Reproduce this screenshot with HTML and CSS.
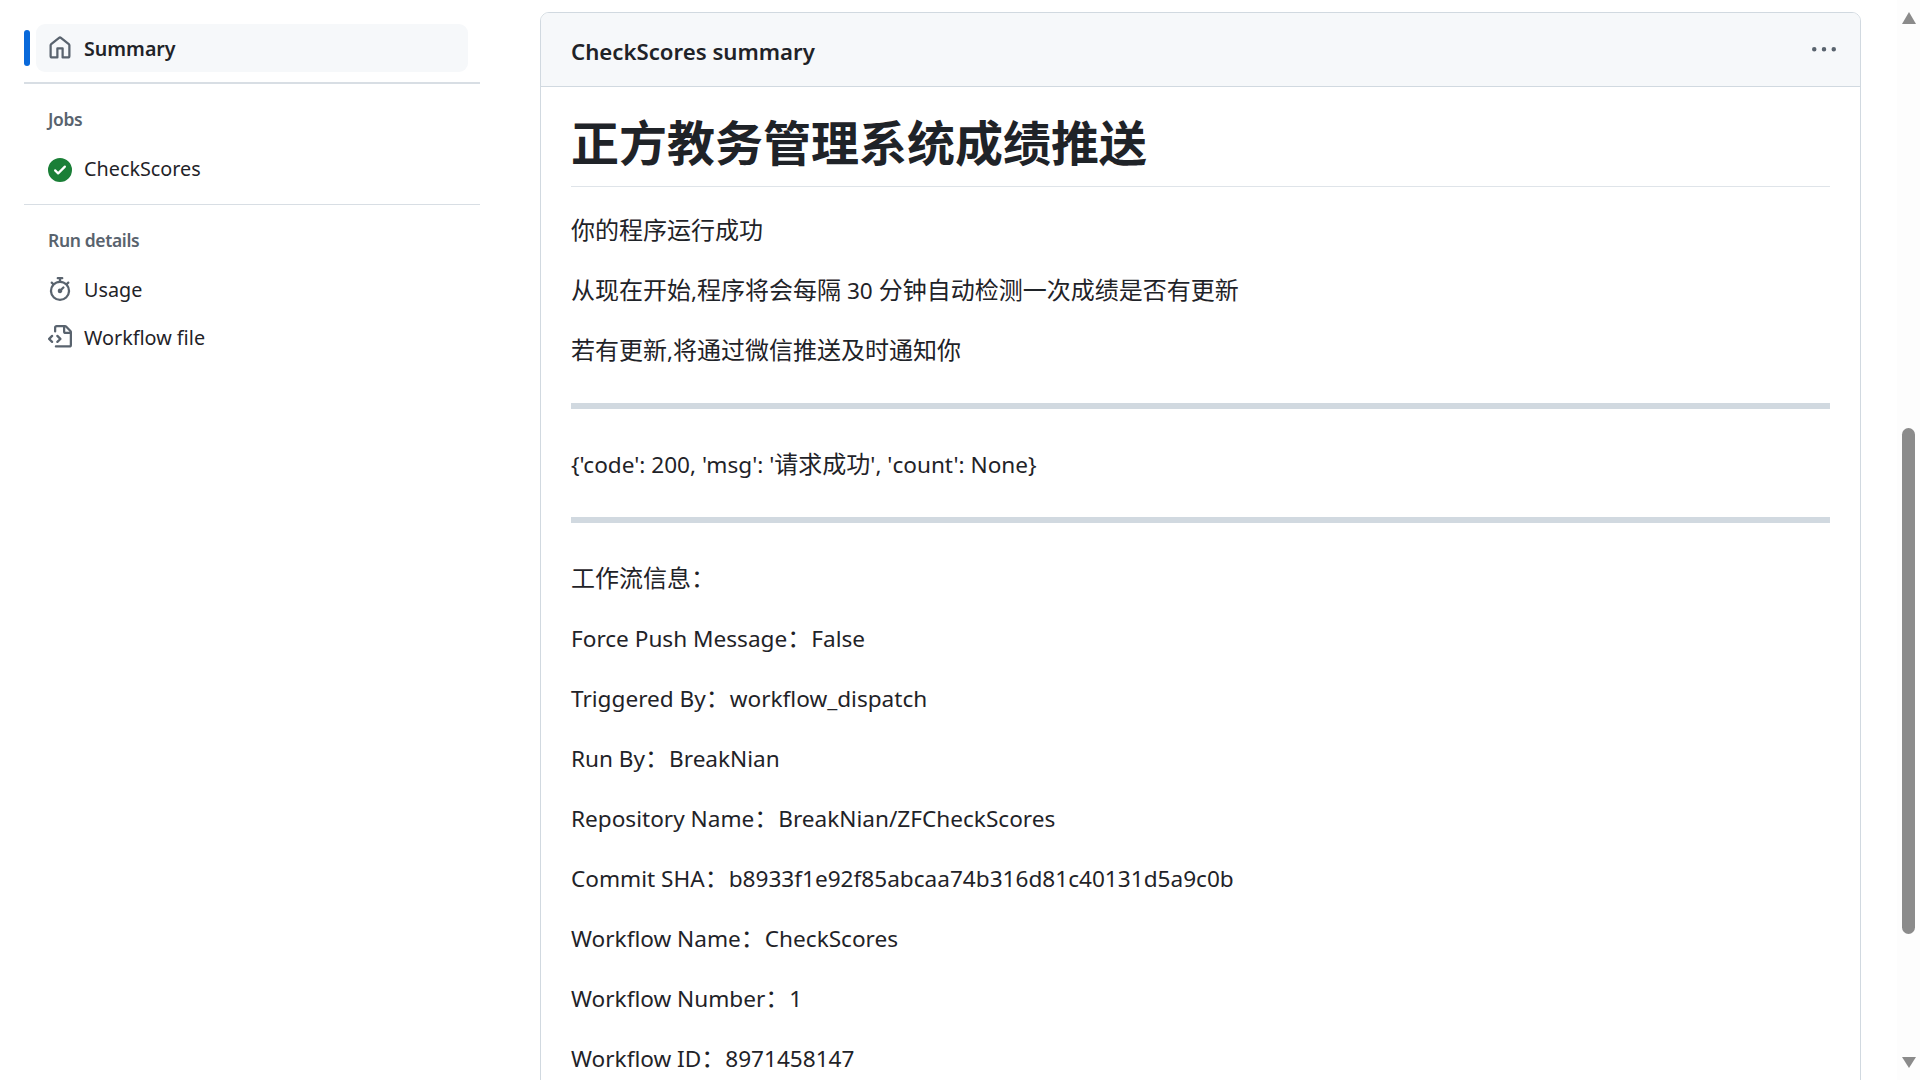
FILE: index.html
```html
<!DOCTYPE html>
<html lang="zh-CN">
<head>
<meta charset="utf-8">
<title>CheckScores summary</title>
<link rel="stylesheet" href="styles.css">
</head>
<body>
<aside class="sidebar">
  <a class="nav-item nav-item-active">
    <svg class="icon icon-muted" viewBox="0 0 16 16"><path d="M6.906.664a1.749 1.749 0 0 1 2.187 0l5.25 4.2c.415.332.657.835.657 1.367v7.019A1.75 1.75 0 0 1 13.25 15h-3.5a.75.75 0 0 1-.75-.75V9H7v5.25a.75.75 0 0 1-.75.75h-3.5A1.75 1.75 0 0 1 1 13.25V6.23c0-.531.242-1.034.657-1.366l5.25-4.2Zm1.25 1.171a.25.25 0 0 0-.312 0l-5.25 4.2a.25.25 0 0 0-.094.196v7.019c0 .138.112.25.25.25H5.5V8.25a.75.75 0 0 1 .75-.75h3.5a.75.75 0 0 1 .75.75v5.25h2.75a.25.25 0 0 0 .25-.25V6.23a.25.25 0 0 0-.094-.195Z"/></svg>
    <span>Summary</span>
  </a>
  <div class="nav-section nav-section-first">
    <h2 class="nav-heading">Jobs</h2>
    <a class="nav-item">
      <svg class="icon icon-success" viewBox="0 0 16 16"><path d="M8 16A8 8 0 1 1 8 0a8 8 0 0 1 0 16Zm3.78-9.72a.751.751 0 0 0-.018-1.042.751.751 0 0 0-1.042-.018L6.75 9.19 5.28 7.72a.751.751 0 0 0-1.042.018.751.751 0 0 0-.018 1.042l2 2a.75.75 0 0 0 1.06 0Z"/></svg>
      <span class="job-label">CheckScores</span>
    </a>
  </div>
  <div class="nav-section">
    <h2 class="nav-heading">Run details</h2>
    <a class="nav-item">
      <svg class="icon icon-muted" viewBox="0 0 16 16"><path d="M5.75.75A.75.75 0 0 1 6.5 0h3a.75.75 0 0 1 0 1.5h-.75v1l-.001.041a6.724 6.724 0 0 1 3.464 1.435l.007-.006.75-.75a.749.749 0 0 1 1.275.326.749.749 0 0 1-.215.734l-.75.75-.006.007a6.75 6.75 0 1 1-10.548 0L2.72 5.03l-.75-.75a.751.751 0 0 1 .018-1.042.751.751 0 0 1 1.042-.018l.75.75.007.006A6.72 6.72 0 0 1 7.25 2.541V1.5H6.5a.75.75 0 0 1-.75-.75ZM8 14.5A5.25 5.25 0 1 0 8 4a5.25 5.25 0 0 0 0 10.5Zm.389-6.7 1.33-1.33a.75.75 0 1 1 1.061 1.06L9.45 8.861A1.503 1.503 0 0 1 8 10.75a1.499 1.499 0 1 1 .389-2.95Z"/></svg>
      <span>Usage</span>
    </a>
    <a class="nav-item">
      <svg class="icon icon-muted" viewBox="0 0 16 16"><path d="M4 1.75C4 .784 4.784 0 5.75 0h5.586c.464 0 .909.184 1.237.513l2.914 2.914c.329.328.513.773.513 1.237v8.586A1.75 1.75 0 0 1 14.25 15h-9a.75.75 0 0 1 0-1.5h9a.25.25 0 0 0 .25-.25V6h-2.75A1.75 1.75 0 0 1 10 4.25V1.5H5.75a.25.25 0 0 0-.25.25v2.5a.75.75 0 0 1-1.5 0Zm1.72 4.97a.75.75 0 0 1 1.06 0l2 2a.75.75 0 0 1 0 1.06l-2 2a.749.749 0 0 1-1.275-.326.749.749 0 0 1 .215-.734l1.47-1.47-1.47-1.47a.75.75 0 0 1 0-1.06ZM3.28 7.78 1.81 9.25l1.47 1.47a.751.751 0 0 1-.018 1.042.751.751 0 0 1-1.042.018l-2-2a.75.75 0 0 1 0-1.06l2-2a.751.751 0 0 1 1.042.018.751.751 0 0 1 .018 1.042Zm8.22-6.218V4.25c0 .138.112.25.25.25h2.688l-.011-.013-2.914-2.914-.013-.011Z"/></svg>
      <span>Workflow file</span>
    </a>
  </div>
</aside>
<main class="main">
  <section class="card">
    <header class="card-header">
      <h3 class="card-title">CheckScores summary</h3>
      <svg class="kebab" viewBox="0 0 16 16"><path d="M8 9a1.5 1.5 0 1 0 0-3 1.5 1.5 0 0 0 0 3ZM1.5 9a1.5 1.5 0 1 0 0-3 1.5 1.5 0 0 0 0 3Zm13 0a1.5 1.5 0 1 0 0-3 1.5 1.5 0 0 0 0 3Z"/></svg>
    </header>
    <article class="markdown">
      <h1>正方教务管理系统成绩推送</h1>
      <p><span class="cjk">你的程序运行成功</span></p>
      <p><span class="cjk">从现在开始</span>,<span class="cjk">程序将会每隔</span> 30 <span class="cjk">分钟自动检测一次成绩是否有更新</span></p>
      <p><span class="cjk">若有更新</span>,<span class="cjk">将通过微信推送及时通知你</span></p>
      <hr>
      <p>{'code': 200, 'msg': '<span class="cjk">请求成功</span>', 'count': None}</p>
      <hr>
      <p><span class="cjk">工作流信息：</span></p>
      <p>Force Push Message<span class="cjk">：</span>False</p>
      <p>Triggered By<span class="cjk">：</span>workflow_dispatch</p>
      <p>Run By<span class="cjk">：</span>BreakNian</p>
      <p>Repository Name<span class="cjk">：</span>BreakNian/ZFCheckScores</p>
      <p>Commit SHA<span class="cjk">：</span>b8933f1e92f85abcaa74b316d81c40131d5a9c0b</p>
      <p>Workflow Name<span class="cjk">：</span>CheckScores</p>
      <p>Workflow Number<span class="cjk">：</span>1</p>
      <p>Workflow ID<span class="cjk">：</span>8971458147</p>
    </article>
  </section>
</main>
<div class="scrollbar">
  <div class="arrow-up"></div>
  <div class="thumb"></div>
  <div class="arrow-down"></div>
</div>
</body>
</html>
```
FILE: styles.css
```css
* { box-sizing: border-box; }
html, body { height: 100%; }
body {
  margin: 0;
  display: flex;
  height: 100vh;
  overflow: hidden;
  background: #fff;
  color: #1f2328;
  font-family: "Noto Sans", "Noto Sans CJK SC", sans-serif;
}
.sidebar {
  flex: 0 0 504px;
  padding: 24px 24px 0;
  font-size: 19.8px;
}
.nav-item {
  display: flex;
  align-items: center;
  gap: 12px;
  height: 48px;
  padding-left: 12px;
  margin: 0 12px;
  border-radius: 9px;
  position: relative;
}
.nav-item-active {
  background: #f6f8fa;
  font-weight: 600;
  font-size: 19.6px;
}
.nav-item-active::before {
  content: "";
  position: absolute;
  left: -12px;
  top: 6px;
  width: 6px;
  height: 36px;
  border-radius: 3px;
  background: #0969da;
}
.job-label { margin-bottom: 3px; }
.icon { width: 24px; height: 24px; flex: none; }
.icon-muted { fill: #59636e; }
.icon-success { fill: #1a7f37; }
.nav-section { border-top: 1px solid #d8dee4; margin-top: 10px; padding-top: 22px; }
.nav-section-first { border-top-width: 2px; }
.nav-heading {
  margin: 0 0 11px;
  padding-left: 24px;
  font-size: 17.5px;
  line-height: 27px;
  font-weight: 600;
  letter-spacing: -0.35px;
  color: #59636e;
}
.nav-section-first .nav-heading { margin-bottom: 13px; }
.main {
  flex: 1;
  min-width: 0;
  padding: 12px 36px 0 36px;
}
.card {
  border: 1px solid #d1d9e0;
  border-radius: 9px;
}
.card-header {
  display: flex;
  align-items: center;
  justify-content: space-between;
  height: 74px;
  padding: 0 24px 0 30px;
  background: #f6f8fa;
  border-bottom: 1px solid #d1d9e0;
  border-radius: 8px 8px 0 0;
}
.card-title {
  margin: 0;
  font-size: 22.2px;
  line-height: 36px;
  font-weight: 600;
  padding-top: 4px;
}
.kebab { width: 24px; height: 24px; fill: #59636e; }
.markdown {
  padding: 24px 30px 0;
  font-size: 22.6px;
  line-height: 36px;
}
.cjk { font-size: 24px; line-height: 1; }
.markdown h1 {
  margin: 0 0 24px;
  padding: 2px 0 13px;
  border-bottom: 1px solid #dfe4e9;
  font-size: 48px;
  line-height: 60px;
  font-weight: 600;
}
.markdown p { margin: 0 0 22px; padding-top: 2px; white-space: nowrap; }
.markdown hr {
  height: 6px;
  margin: 34px 0 36px;
  border: 0;
  background: #d1d9e0;
}
.scrollbar {
  flex: 0 0 23px;
  display: flex;
  flex-direction: column;
  align-items: center;
  background: #fdfdfd;
  padding-top: 12px;
}
.arrow-up, .arrow-down {
  width: 0;
  height: 0;
  border-left: 7.5px solid transparent;
  border-right: 7.5px solid transparent;
}
.arrow-up { border-bottom: 12px solid #8b8b8b; }
.arrow-down { border-top: 11px solid #8b8b8b; margin-top: 123px; }
.thumb {
  flex: none;
  width: 13px;
  height: 506px;
  margin-top: 404px;
  border-radius: 7px;
  background: #8b8b8b;
}
```
